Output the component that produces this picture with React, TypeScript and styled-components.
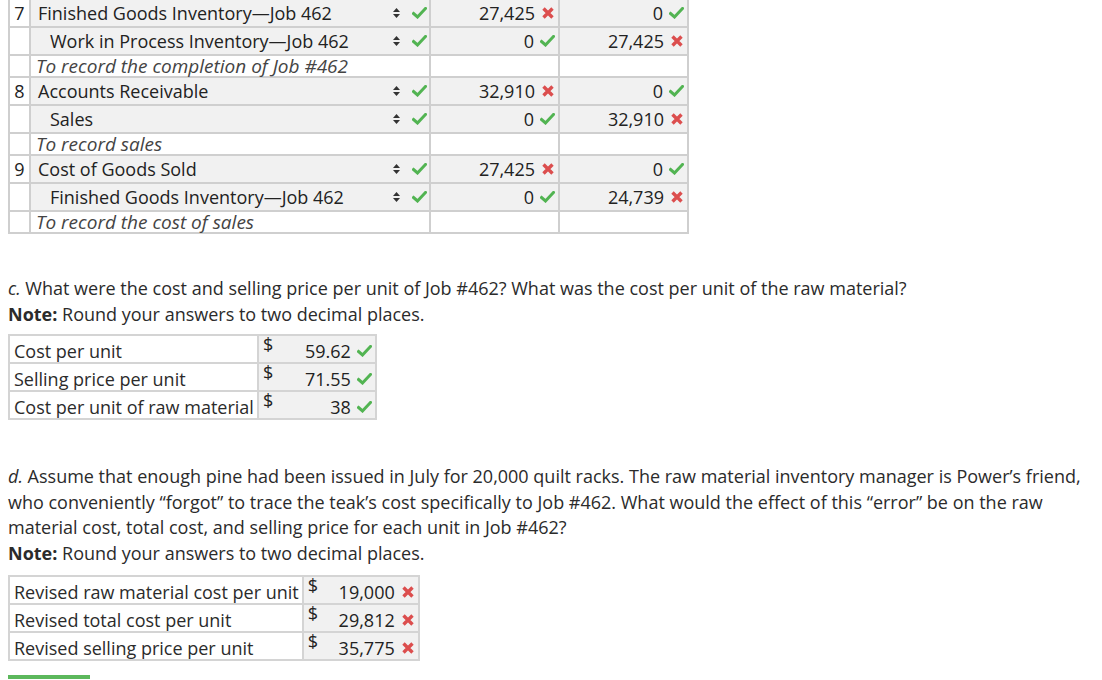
import React from 'react';
import styled, { createGlobalStyle } from 'styled-components';

const GlobalStyle = createGlobalStyle`
	html, body {
		margin: 0;
		padding: 0;
		background: #fff;
	}

	body {
		font-family: 'Open Sans', 'Liberation Sans', sans-serif;
		font-size: 18px;
		color: #222;
	}
`;

const Page = styled.main`
	padding: 0 8px;
	margin-top: -2px;
	overflow: hidden;
	height: 682px;
`;

/* journal table */

const Journal = styled.table`
	border-collapse: collapse;
	table-layout: fixed;
	width: 679px;

	& td {
		border: 2px solid #cfcfcf;
		padding: 0;
	}
`;

const EntryRow = styled.tr<{ $memo?: boolean }>`
	height: ${(p) => (p.$memo ? '22px' : '28px')};

	& > td {
		background: ${(p) => (p.$memo ? '#fff' : '#f1f1f1')};
	}
`;

const NumCell = styled.td`
	width: 19px;
	text-align: center;
	background: #fff !important;
	line-height: 20px;
`;

const AccountCell = styled.td`
	width: 398px;
`;

const AccountInner = styled.div<{ $indent?: boolean }>`
	display: flex;
	align-items: center;
	padding-left: ${(p) => (p.$indent ? '19px' : '7px')};
	padding-right: 2px;
	line-height: 22px;
`;

const AccountName = styled.span`
	flex: 1;
	white-space: nowrap;
`;

const Memo = styled.div`
	font-style: italic;
	font-size: 19px;
	color: #444;
	padding-left: 5px;
	line-height: 18px;
	white-space: nowrap;
`;

const AmountCell = styled.td`
	width: 127px;
`;

const Amount = styled.div`
	display: flex;
	justify-content: flex-end;
	align-items: center;
	gap: 6px;
	padding-right: 3px;
	line-height: 22px;
`;

const Arrows = styled.span`
	display: inline-flex;
	flex-direction: column;
	gap: 2px;
	margin-right: 12px;
`;

/* question text */

const Question = styled.p<{ $top: number }>`
	margin: ${(p) => p.$top}px 0 0;
	line-height: 25.6px;
	color: #2b2b2b;
`;

const Note = styled.span`
	display: block;
`;

/* small answer tables */

const AnswerTable = styled.table<{ $top: number }>`
	border-collapse: collapse;
	margin-top: ${(p) => p.$top}px;

	& td {
		border: 2px solid #d4d4d4;
		padding: 0;
	}

	& tr {
		height: 28px;
	}
`;

const LabelCell = styled.td`
	padding: 0 3px 0 4px !important;
	white-space: nowrap;
	line-height: 22px;
	vertical-align: bottom;
	color: #2b2b2b;
`;

const ValueCell = styled.td<{ $w: number }>`
	width: ${(p) => p.$w}px;
	background: #f1f1f1;
`;

const ValueInner = styled.div`
	display: flex;
	align-items: flex-start;
	padding: 0 3px 0 4px;
	line-height: 20px;
`;

const Dollar = styled.span`
	margin-top: -3px;
`;

const ValueText = styled.span`
	flex: 1;
	display: flex;
	justify-content: flex-end;
	align-items: center;
	gap: 6px;
	margin-top: 4px;
`;

const SubmitBar = styled.div`
	width: 82px;
	height: 4px;
	margin-top: 14px;
	background: #5cb85c;
`;

/* icons */

const Check = () => (
	<svg width="15" height="12" viewBox="0 0 15 12" style={{ flexShrink: 0 }}>
		<path d="M1.5 6.5 L5.5 10 L13.5 1.5" fill="none" stroke="#52b452" strokeWidth="3" strokeLinecap="square" />
	</svg>
);

const Cross = () => (
	<svg width="12" height="12" viewBox="0 0 12 12" style={{ flexShrink: 0, margin: '0 1px' }}>
		<path d="M1.5 1.5 L10.5 10.5 M10.5 1.5 L1.5 10.5" stroke="#dc4e4e" strokeWidth="3.4" />
	</svg>
);

const SelectArrows = () => (
	<Arrows>
		<svg width="7" height="4" viewBox="0 0 7 4">
			<path d="M3.5 0 L7 4 L0 4 Z" fill="#333" />
		</svg>
		<svg width="7" height="4" viewBox="0 0 7 4">
			<path d="M0 0 L7 0 L3.5 4 Z" fill="#333" />
		</svg>
	</Arrows>
);

const Mark = ({ ok }: { ok: boolean }) => (ok ? <Check /> : <Cross />);

type Line = { account: string; indent?: boolean; debit: string; dOk: boolean; credit: string; cOk: boolean };
type Entry = { no: number; lines: Line[]; memo: string };

const entries: Entry[] = [
	{
		no: 7,
		lines: [
			{ account: 'Finished Goods Inventory—Job 462', debit: '27,425', dOk: false, credit: '0', cOk: true },
			{ account: 'Work in Process Inventory—Job 462', indent: true, debit: '0', dOk: true, credit: '27,425', cOk: false },
		],
		memo: 'To record the completion of Job #462',
	},
	{
		no: 8,
		lines: [
			{ account: 'Accounts Receivable', debit: '32,910', dOk: false, credit: '0', cOk: true },
			{ account: 'Sales', indent: true, debit: '0', dOk: true, credit: '32,910', cOk: false },
		],
		memo: 'To record sales',
	},
	{
		no: 9,
		lines: [
			{ account: 'Cost of Goods Sold', debit: '27,425', dOk: false, credit: '0', cOk: true },
			{ account: 'Finished Goods Inventory—Job 462', indent: true, debit: '0', dOk: true, credit: '24,739', cOk: false },
		],
		memo: 'To record the cost of sales',
	},
];

const unitAnswers = [
	{ label: 'Cost per unit', value: '59.62', ok: true },
	{ label: 'Selling price per unit', value: '71.55', ok: true },
	{ label: 'Cost per unit of raw material', value: '38', ok: true },
];

const revisedAnswers = [
	{ label: 'Revised raw material cost per unit', value: '19,000', ok: false },
	{ label: 'Revised total cost per unit', value: '29,812', ok: false },
	{ label: 'Revised selling price per unit', value: '35,775', ok: false },
];

type Answer = { label: string; value: string; ok: boolean };

const Answers = ({ rows, top, w }: { rows: Answer[]; top: number; w: number }) => (
	<AnswerTable $top={top}>
		<tbody>
			{rows.map((r) => (
				<tr key={r.label}>
					<LabelCell>{r.label}</LabelCell>
					<ValueCell $w={w}>
						<ValueInner>
							<Dollar>$</Dollar>
							<ValueText>
								{r.value}
								<Mark ok={r.ok} />
							</ValueText>
						</ValueInner>
					</ValueCell>
				</tr>
			))}
		</tbody>
	</AnswerTable>
);

export default function App() {
	return (
		<>
			<GlobalStyle />
			<Page>
				<Journal>
					<tbody>
						{entries.map((e) => (
							<React.Fragment key={e.no}>
								{e.lines.map((l, i) => (
									<EntryRow key={l.account + i}>
										<NumCell>{i === 0 ? e.no : ''}</NumCell>
										<AccountCell>
											<AccountInner $indent={l.indent}>
												<AccountName>{l.account}</AccountName>
												<SelectArrows />
												<Check />
											</AccountInner>
										</AccountCell>
										<AmountCell>
											<Amount>
												{l.debit}
												<Mark ok={l.dOk} />
											</Amount>
										</AmountCell>
										<AmountCell>
											<Amount>
												{l.credit}
												<Mark ok={l.cOk} />
											</Amount>
										</AmountCell>
									</EntryRow>
								))}
								<EntryRow $memo>
									<NumCell />
									<AccountCell>
										<Memo>{e.memo}</Memo>
									</AccountCell>
									<AmountCell />
									<AmountCell />
								</EntryRow>
							</React.Fragment>
						))}
					</tbody>
				</Journal>

				<Question $top={42}>
					<i>c.</i> What were the cost and selling price per unit of Job #462? What was the cost per unit of the raw material?
					<Note>
						<b>Note:</b> Round your answers to two decimal places.
					</Note>
				</Question>

				<Answers rows={unitAnswers} top={7} w={116} />

				<Question $top={44}>
					<i>d.</i> Assume that enough pine had been issued in July for 20,000 quilt racks. The raw material inventory
					manager is Power’s friend, who conveniently “forgot” to trace the teak’s cost specifically to Job #462. What
					would the effect of this “error” be on the raw material cost, total cost, and selling price for each unit in
					Job #462?
					<Note>
						<b>Note:</b> Round your answers to two decimal places.
					</Note>
				</Question>

				<Answers rows={revisedAnswers} top={8} w={114} />

				<SubmitBar />
			</Page>
		</>
	);
}
